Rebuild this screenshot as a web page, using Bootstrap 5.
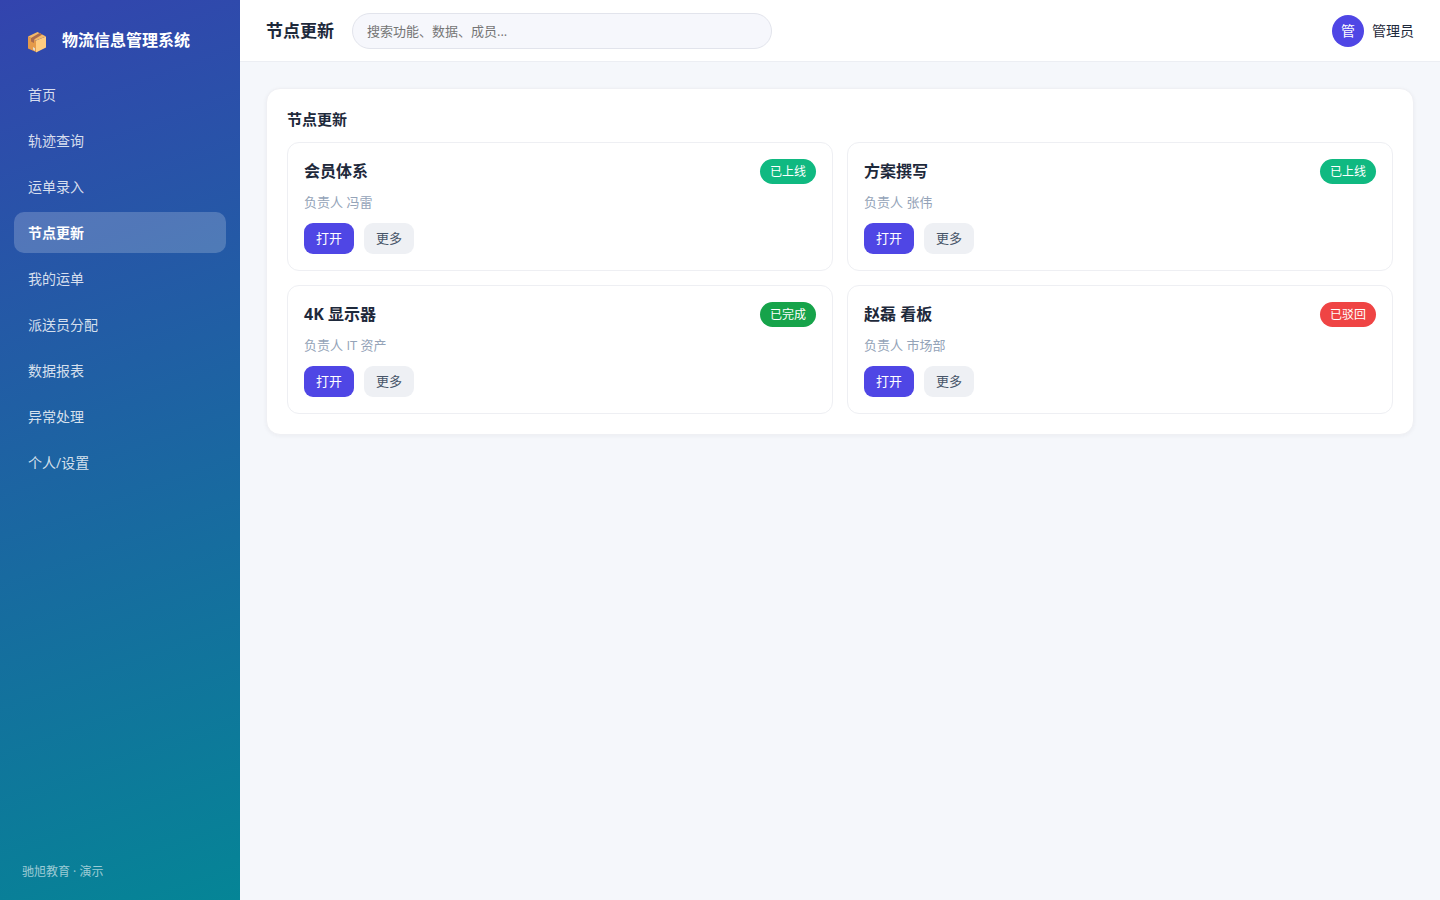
<!DOCTYPE html>
<html lang="zh-CN">
<head>
<meta charset="utf-8">
<meta name="viewport" content="width=device-width, initial-scale=1">
<title>物流信息管理系统</title>
<link href="https://cdn.jsdelivr.net/npm/bootstrap@5.3.0/dist/css/bootstrap.min.css" rel="stylesheet">
<style>
  body { font-family: "Open Sans", "Noto Sans CJK SC", sans-serif; font-size: 14px; line-height: 21px; color: #1e293b; background: #f5f7fb; }
  .side { width: 240px; padding: 22px 14px 18px; background: linear-gradient(160deg, #3344ae, #058596); }
  .brand { gap: 14px; padding: 0 12px; margin-bottom: 15px; height: 37px; color: #fff; font-size: 16px; font-weight: 600; }
  .side-nav { gap: 5px; }
  .side-nav .nav-link { padding: 10px 14px; font-size: 14px; color: rgba(255,255,255,.82); border-radius: 10px; }
  .side-nav .nav-link.active { background: rgba(255,255,255,.2); color: #fff; font-weight: 700; }
  .side-foot { padding: 0 8px; font-size: 12px; color: rgba(255,255,255,.6); }
  .topbar { height: 62px; padding: 0 26px; gap: 18px; border-bottom: 1px solid #eceef3; }
  .page-title { font-size: 17px; font-weight: 700; line-height: 22px; }
  .search { width: 420px; height: 36px; padding: 0 14px; font-size: 13px; border-color: #e2e4ec; background: #f6f7fc; }
  .search::placeholder { color: #757575; }
  .avatar { width: 32px; height: 32px; background: #4f46e5; }
  .panel { margin: 26px; padding: 20px; border: 1px solid #eff0f4; border-radius: 14px; box-shadow: 0 1px 4px rgba(30,41,59,.05); }
  .panel-title { font-size: 15px; line-height: 20px; font-weight: 700; margin-bottom: 13px; }
  .tiles { --bs-gutter-x: 14px; --bs-gutter-y: 14px; }
  .tile { padding: 16px; border: 1px solid #eeeff3; border-radius: 12px; }
  .tile-title { font-size: 16px; line-height: 25px; font-weight: 700; }
  .status { padding: 0 10px; font-size: 12px; line-height: 25px; font-weight: 400; }
  .online { background: #10b981; }
  .done { background: #16a34a; }
  .rejected { background: #ef4444; }
  .owner { margin: 8px 0 10px; font-size: 13px; color: #94a3b8; }
  .acts { gap: 10px; }
  .act { padding: 0 12px; font-size: 13px; line-height: 31px; border: 0; border-radius: 9px; }
  .act-open, .act-open:hover { background: #4f46e5; color: #fff; }
  .act-more, .act-more:hover { background: #eef0f4; color: #475569; }
</style>
</head>
<body>
<div class="d-flex min-vh-100">
  <aside class="side d-flex flex-column flex-shrink-0">
    <div class="brand d-flex align-items-center">
      <svg class="flex-shrink-0" width="22" height="24" viewBox="0 -2 22 24" aria-hidden="true">
        <path fill="#e59a4a" d="M2 5.5 10 9.5V21L2 17.5Z"/>
        <path fill="#ffcc80" d="M10 9.5 20 5.5V16.5L10 21.5Z"/>
        <path fill="#f5b968" d="M2 5.5 11.5 1 20 5.5 10 9.5Z"/>
        <path fill="#a96b4f" d="M5 7 13.5 2 16.3 3.5 8 8.5V12L5 10.5Z"/>
        <path fill="#e0dccf" d="M7 16 9 17.3V20L7 18.5Z"/>
      </svg>
      <span>物流信息管理系统</span>
    </div>
    <nav class="side-nav nav flex-column" aria-label="主导航">
      <a class="nav-link" href="#">首页</a>
      <a class="nav-link" href="#">轨迹查询</a>
      <a class="nav-link" href="#">运单录入</a>
      <a class="nav-link active" aria-current="page" href="#">节点更新</a>
      <a class="nav-link" href="#">我的运单</a>
      <a class="nav-link" href="#">派送员分配</a>
      <a class="nav-link" href="#">数据报表</a>
      <a class="nav-link" href="#">异常处理</a>
      <a class="nav-link" href="#">个人/设置</a>
    </nav>
    <div class="side-foot mt-auto">驰旭教育 · 演示</div>
  </aside>
  <div class="flex-grow-1">
    <header class="topbar d-flex align-items-center bg-white">
      <h1 class="page-title mb-0">节点更新</h1>
      <input class="search form-control rounded-pill" type="search" placeholder="搜索功能、数据、成员..." aria-label="搜索">
      <div class="d-flex align-items-center gap-2 ms-auto">
        <span class="avatar rounded-circle d-flex align-items-center justify-content-center text-white">管</span>
        <span>管理员</span>
      </div>
    </header>
    <main>
      <section class="panel bg-white">
        <h2 class="panel-title">节点更新</h2>
        <div class="tiles row row-cols-1 row-cols-lg-2">
          <div class="col">
            <article class="tile">
              <div class="d-flex justify-content-between">
                <h3 class="tile-title mb-0">会员体系</h3>
                <span class="status online badge rounded-pill">已上线</span>
              </div>
              <p class="owner">负责人 冯雷</p>
              <div class="acts d-flex"><button class="act act-open btn" type="button">打开</button><button class="act act-more btn" type="button">更多</button></div>
            </article>
          </div>
          <div class="col">
            <article class="tile">
              <div class="d-flex justify-content-between">
                <h3 class="tile-title mb-0">方案撰写</h3>
                <span class="status online badge rounded-pill">已上线</span>
              </div>
              <p class="owner">负责人 张伟</p>
              <div class="acts d-flex"><button class="act act-open btn" type="button">打开</button><button class="act act-more btn" type="button">更多</button></div>
            </article>
          </div>
          <div class="col">
            <article class="tile">
              <div class="d-flex justify-content-between">
                <h3 class="tile-title mb-0">4K 显示器</h3>
                <span class="status done badge rounded-pill">已完成</span>
              </div>
              <p class="owner">负责人 IT 资产</p>
              <div class="acts d-flex"><button class="act act-open btn" type="button">打开</button><button class="act act-more btn" type="button">更多</button></div>
            </article>
          </div>
          <div class="col">
            <article class="tile">
              <div class="d-flex justify-content-between">
                <h3 class="tile-title mb-0">赵磊 看板</h3>
                <span class="status rejected badge rounded-pill">已驳回</span>
              </div>
              <p class="owner">负责人 市场部</p>
              <div class="acts d-flex"><button class="act act-open btn" type="button">打开</button><button class="act act-more btn" type="button">更多</button></div>
            </article>
          </div>
        </div>
      </section>
    </main>
  </div>
</div>
<script src="https://cdn.jsdelivr.net/npm/bootstrap@5.3.0/dist/js/bootstrap.bundle.min.js"></script>
</body>
</html>
